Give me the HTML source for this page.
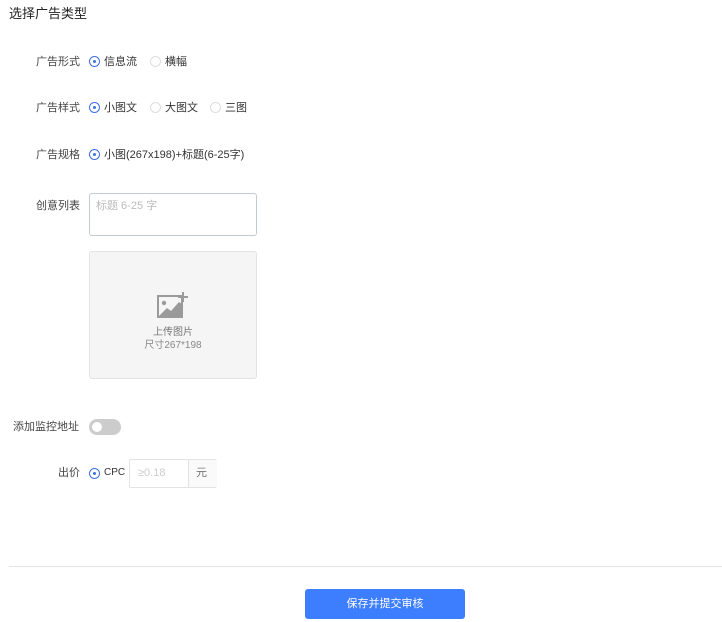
<!DOCTYPE html><html><head><meta charset="utf-8"><style>
body{margin:0;width:722px;height:622px;background:#fff;position:relative;font-family:"Liberation Sans","Noto Sans CJK SC",sans-serif;color:#333;font-size:11px;overflow:hidden}
.a{position:absolute;white-space:nowrap;line-height:14px}
.l{position:absolute;width:70px;left:10px;text-align:right;line-height:14px;color:#444}
.r{position:absolute;width:11px;height:11px;border:1px solid #ddd;border-radius:50%;box-sizing:border-box}
.r.on{border:1px solid #3d6fe6}
.r.on:after{content:"";position:absolute;left:3px;top:3px;width:3px;height:3px;border-radius:50%;background:#3d6fe6}
</style></head><body>
<div class="a" style="left:9px;top:7px;font-size:13px;color:#222">选择广告类型</div>

<div class="l" style="top:55px">广告形式</div>
<div class="r on" style="left:89px;top:56px"></div><div class="a" style="left:104px;top:55px">信息流</div>
<div class="r" style="left:150px;top:56px"></div><div class="a" style="left:165px;top:55px">横幅</div>

<div class="l" style="top:101px">广告样式</div>
<div class="r on" style="left:89px;top:102px"></div><div class="a" style="left:104px;top:101px">小图文</div>
<div class="r" style="left:150px;top:102px"></div><div class="a" style="left:165px;top:101px">大图文</div>
<div class="r" style="left:210px;top:102px"></div><div class="a" style="left:225px;top:101px">三图</div>

<div class="l" style="top:148px">广告规格</div>
<div class="r on" style="left:89px;top:149px"></div><div class="a" style="left:104px;top:148px">小图(267x198)+标题(6-25字)</div>

<div class="l" style="top:199px">创意列表</div>
<div style="position:absolute;left:89px;top:193px;width:168px;height:43px;border:1px solid #c3cad6;border-radius:3px;box-sizing:border-box"></div>
<div class="a" style="left:96px;top:199px;color:#bbb">标题 6-25 字</div>

<div style="position:absolute;left:89px;top:251px;width:168px;height:128px;border:1px solid #e3e3e3;border-radius:3px;background:#f5f5f5;box-sizing:border-box"></div>
<svg style="position:absolute;left:157px;top:291px" width="32" height="28" viewBox="0 0 32 28"><rect x="1" y="5" width="24" height="21" fill="none" stroke="#9a9a9a" stroke-width="2"/><circle cx="7" cy="12" r="2.2" fill="#9a9a9a"/><path d="M2 25 L10 17 L14 20 L22 11 L25 13 L25 25 Z" fill="#9a9a9a"/><path d="M26 1 V11 M21 6 H31" stroke="#9a9a9a" stroke-width="2"/></svg>
<div class="a" style="left:89px;width:168px;text-align:center;top:326px;color:#777;font-size:10px">上传图片</div>
<div class="a" style="left:89px;width:168px;text-align:center;top:339px;color:#888;font-size:10px">尺寸267*198</div>

<div class="a" style="left:13px;top:420px;color:#444">添加监控地址</div>
<div style="position:absolute;left:89px;top:419px;width:32px;height:16px;border-radius:8px;background:#ccc"></div>
<div style="position:absolute;left:92px;top:422px;width:10px;height:10px;border-radius:50%;background:#fff"></div>

<div class="a" style="left:58px;top:466px;color:#444">出价</div>
<div class="r on" style="left:89px;top:468px"></div><div class="a" style="left:104px;top:466px;font-size:10px">CPC</div>
<div style="position:absolute;left:129px;top:459px;width:88px;height:29px;border:1px solid #e3e3e3;border-radius:2px;box-sizing:border-box"></div>
<div style="position:absolute;left:188px;top:460px;width:28px;height:27px;border-left:1px solid #e3e3e3;background:#fafafa"></div>
<div class="a" style="left:138px;top:466px;color:#ccc">≥0.18</div>
<div class="a" style="left:196px;top:466px;color:#777">元</div>

<div style="position:absolute;left:9px;top:566px;width:713px;height:1px;background:#e5e5e5"></div>
<div style="position:absolute;left:305px;top:589px;width:160px;height:30px;border-radius:3px;background:#3d7eff;color:#fff;text-align:center;line-height:31px">保存并提交审核</div>
</body></html>
